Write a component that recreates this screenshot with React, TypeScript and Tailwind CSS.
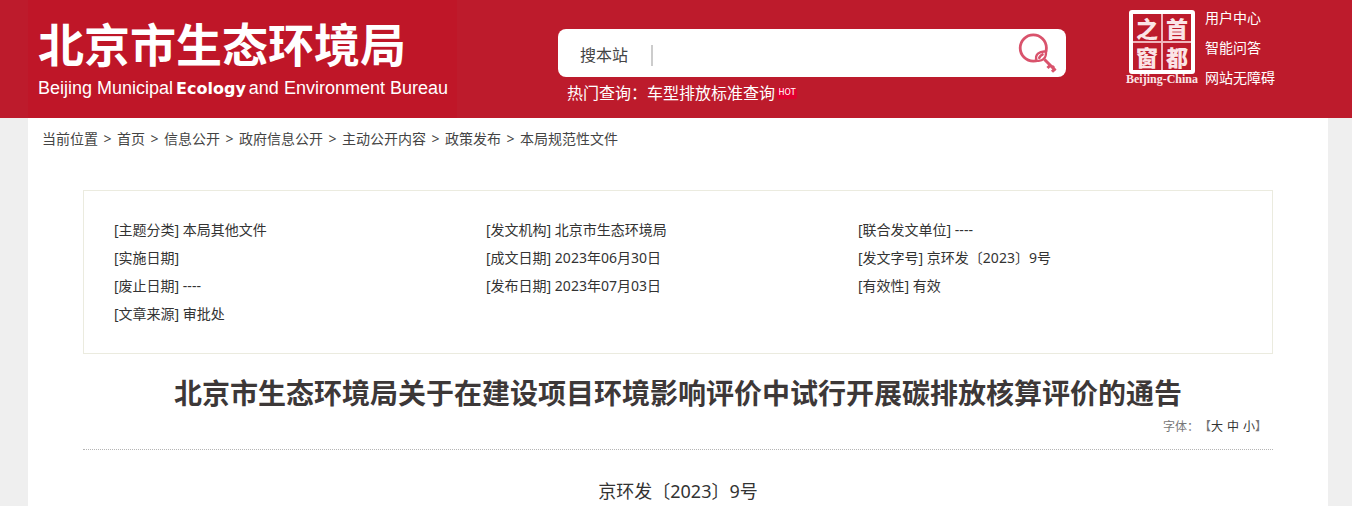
import React from "react";

const crumbs = ["首页", "信息公开", "政府信息公开", "主动公开内容", "政策发布", "本局规范性文件"];

const details: [string, string][][] = [
  [
    ["主题分类", "本局其他文件"],
    ["实施日期", ""],
    ["废止日期", "----"],
    ["文章来源", "审批处"],
  ],
  [
    ["发文机构", "北京市生态环境局"],
    ["成文日期", "2023年06月30日"],
    ["发布日期", "2023年07月03日"],
  ],
  [
    ["联合发文单位", "----"],
    ["发文字号", "京环发〔2023〕9号"],
    ["有效性", "有效"],
  ],
];

function KeyIcon() {
  return (
    <svg viewBox="0 0 40 40" className="size-10" fill="none" stroke="#d9536c" aria-hidden="true">
      <circle cx="15.3" cy="15" r="13.1" strokeWidth="2.8" />
      <path d="M18.6 27.6c-2.200-5.600 2.600-9.800 9.400-9 .4 6.600-3.200 10-9.400 9z" fill="#fff" strokeWidth="2.300" />
      <path d="M20.800 25.800c.8-2.400 2.200-3.900 4.700-4.900" strokeWidth="2.400" />
      <path d="M26.500 26.500l11 11" strokeWidth="3" />
      <path d="M29.500 35l3.200-3.200M34 38.800l3-3M36 33l-2 2" strokeWidth="3" />
    </svg>
  );
}

function Seal() {
  return (
    <span className="grid h-[64px] w-[66px] grid-cols-2 grid-rows-2 rounded-[3px] border-4 border-white text-[22px] font-black leading-[22px]">
      <span className="flex items-center justify-center border-b border-r border-[#f0b6bc]">之</span>
      <span className="flex items-center justify-center border-b border-l border-[#f0b6bc]">首</span>
      <span className="flex items-center justify-center border-r border-t border-[#f0b6bc]">窗</span>
      <span className="flex items-center justify-center border-l border-t border-[#f0b6bc]">都</span>
    </span>
  );
}

function Header() {
  return (
    <header className="bg-[#bd1b2c] pl-7 text-white">
      <div className="flex h-[118px] w-full max-w-[1300px]">
        <a href="#" className="block w-[429px] shrink-0 bg-[#bf1628] pl-[10px] pt-[15px]">
          <h1 className="whitespace-nowrap text-[46px] font-bold leading-[58px]">北京市生态环境局</h1>
          <p className="flex items-baseline gap-[3px] whitespace-nowrap font-['Liberation_Sans',sans-serif] text-[18px] leading-[30px]">
            <span>Beijing Municipal</span>
            <b className="font-['DejaVu_Sans',sans-serif] text-[16px]">Ecology</b>
            <span>and Environment Bureau</span>
          </p>
        </a>
        <div className="ml-[101px] mt-[29px] w-[508px] shrink-0">
          <form className="flex h-12 items-center rounded-lg bg-white pl-[22px] pr-2" onSubmit={(e) => e.preventDefault()}>
            <label htmlFor="q" className="pt-1 text-[16px] text-[#444]">搜本站</label>
            <span className="ml-[23px] mt-1 h-[21px] w-[2px] bg-[#ccc]" />
            <input id="q" type="text" className="ml-2 h-10 min-w-0 flex-1 bg-transparent text-[16px] text-[#444] outline-none" />
            <button type="submit" aria-label="搜索"><KeyIcon /></button>
          </form>
          <p className="flex items-center pl-[9px] text-[16px] leading-8">
            <span>热门查询：</span>
            <a href="#">车型排放标准查询</a>
            <span className="ml-[2px] flex h-[11px] w-[20px] items-center justify-center rounded-[2px] bg-[#e0002f] font-['DejaVu_Sans',sans-serif] text-[8px] leading-none">HOT</span>
          </p>
        </div>
        <a href="#" className="ml-[58px] flex w-[76px] shrink-0 flex-col items-center pt-[10px] text-[#fbe4e6]">
          <Seal />
          <span className="whitespace-nowrap font-['Liberation_Serif',serif] text-[12px] font-bold leading-[11px]">Beijing-China</span>
        </a>
        <nav className="ml-[5px] flex flex-col whitespace-nowrap pt-[3px] text-[14px] leading-[30px]">
          <a href="#">用户中心</a>
          <a href="#">智能问答</a>
          <a href="#">网站无障碍</a>
        </nav>
      </div>
    </header>
  );
}

export default function App() {
  return (
    <div className="min-h-screen bg-[#efefef] font-['Noto_Sans','Noto_Sans_CJK_SC',sans-serif]">
      <Header />
      <div className="pl-7 pr-6">
        <main className="min-h-[388px] bg-white text-[#333]">
          <nav className="flex gap-[5px] pl-[14px] pt-[7px] text-[14px] leading-7 text-[#444]">
            <span>当前位置</span>
            {crumbs.map((c) => (
              <React.Fragment key={c}>
                <span className="w-[9px] text-center">&gt;</span>
                <a href="#">{c}</a>
              </React.Fragment>
            ))}
          </nav>
          <div className="px-[55px] pt-[37px]">
            <section className="grid grid-cols-3 border border-[#ebebdf] py-[25px] pl-[30px] pr-[42px] text-[14px] leading-7">
              {details.map((col, i) => (
                <ul key={i}>
                  {col.map(([k, v]) => (
                    <li key={k}>[{k}] {v}</li>
                  ))}
                </ul>
              ))}
            </section>
            <h2 className="pt-[19px] text-center text-[28px] font-bold leading-10 text-[#3d3838]">
              北京市生态环境局关于在建设项目环境影响评价中试行开展碳排放核算评价的通告
            </h2>
            <div className="flex h-[37px] justify-end border-b border-dotted border-[#b5b5b5] pr-[6px] text-[12px] leading-7 text-[#777]">
              <span>字体：</span>
              <span className="flex items-start">
                <span>【</span>
                <span className="flex items-start gap-1 text-[#333]">
                  <button type="button" className="leading-7">大</button>
                  <button type="button" className="leading-7">中</button>
                  <button type="button" className="leading-7">小</button>
                </span>
                <span>】</span>
              </span>
            </div>
            <p className="pt-[23px] text-center text-[18px] leading-9">京环发〔2023〕9号</p>
          </div>
        </main>
      </div>
    </div>
  );
}
